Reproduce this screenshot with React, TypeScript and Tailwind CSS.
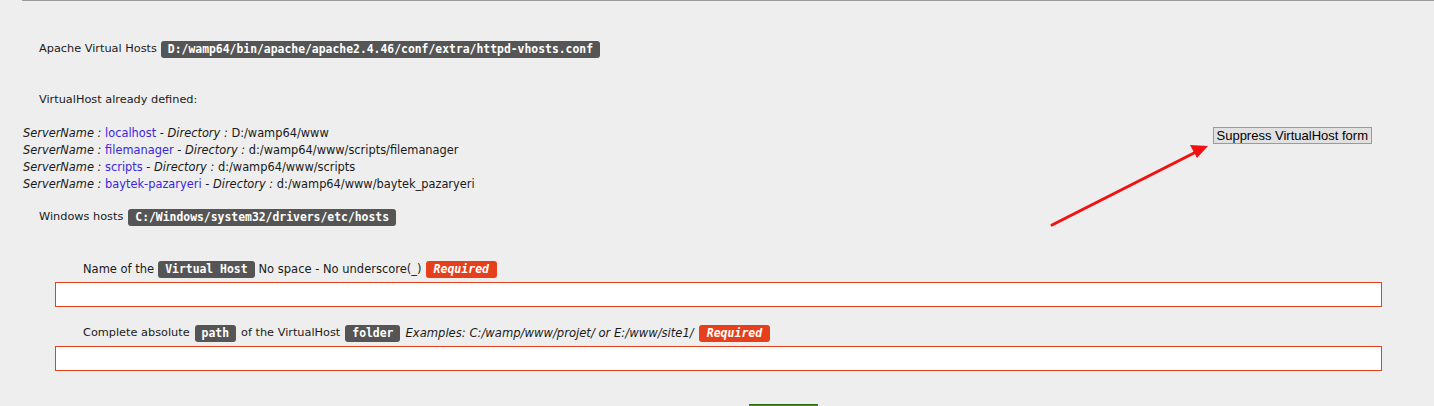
import React from "react";

const sans = { fontFamily: '"DejaVu Sans", Verdana, sans-serif' } as const;

function Code({ children }: { children: React.ReactNode }) {
  return (
    <span className="inline-flex items-center h-[17px] px-[7px] rounded-[3px] bg-[#555555] text-white font-bold text-[11.4px] leading-none align-middle [font-family:'DejaVu_Sans_Mono',monospace]">
      {children}
    </span>
  );
}

function Required() {
  return (
    <span className="inline-flex items-center h-[17px] px-[8px] rounded-[3px] bg-[#e5401b] text-white font-bold italic text-[11.5px] leading-none align-middle [font-family:'DejaVu_Sans_Mono',monospace]">
      Required
    </span>
  );
}

const hosts = [
  { name: "localhost", dir: "D:/wamp64/www" },
  { name: "filemanager", dir: "d:/wamp64/www/scripts/filemanager" },
  { name: "scripts", dir: "d:/wamp64/www/scripts" },
  { name: "baytek-pazaryeri", dir: "d:/wamp64/www/baytek_pazaryeri" },
];

export default function App() {
  return (
    <div
      className="relative w-[1434px] h-[406px] overflow-hidden bg-[#eeeeee] text-[#1a1a1a] text-[11.3px]"
      style={sans}
    >
      <div className="ml-[22px] border-t border-[#9a9a9a]" />

      <div className="mt-[40px] pl-[39px] flex items-center gap-[4px] h-[17px]">
        <span>Apache Virtual Hosts</span>
        <Code>D:/wamp64/bin/apache/apache2.4.46/conf/extra/httpd-vhosts.conf</Code>
      </div>

      <div className="mt-[34px] pl-[39px] h-[17px] flex items-center">
        VirtualHost already defined:
      </div>

      <div className="mt-[16px] flex items-start justify-between pr-[62px]">
        <div className="pl-[23px] flex flex-col text-[11.4px]">
          {hosts.map((h) => (
            <div key={h.name} className="h-[17px] flex items-center whitespace-pre">
              <span className="italic">ServerName : </span>
              <span className="text-[#3b27dd]">{h.name}</span>
              <span> - </span>
              <span className="italic">Directory : </span>
              <span>{h.dir}</span>
            </div>
          ))}
        </div>
        <button className="mt-[2px] h-[17px] px-[3px] bg-[#e1e1e1] border border-[#9a9a9a] text-black text-[13px] leading-none [font-family:'Liberation_Sans',Arial,sans-serif]">
          Suppress VirtualHost form
        </button>
      </div>

      <div className="mt-[16px] pl-[39px] flex items-center gap-[5px] h-[17px]">
        <span>Windows hosts</span>
        <Code>C:/Windows/system32/drivers/etc/hosts</Code>
      </div>

      <div className="mt-[35px] pl-[83px] flex items-center gap-[4px] h-[17px] text-[11.5px]">
        <span>Name of the</span>
        <Code>Virtual Host</Code>
        <span>No space - No underscore(_)</span>
        <Required />
      </div>
      <div className="mt-[4px] ml-[55px] w-[1327px] h-[25px] bg-white border border-[#e5401b]" />

      <div className="mt-[18px] pl-[83px] flex items-center gap-[5px] h-[17px]">
        <span>Complete absolute</span>
        <Code>path</Code>
        <span>of the VirtualHost</span>
        <Code>folder</Code>
        <span className="italic text-[11.6px]">Examples: C:/wamp/www/projet/ or E:/www/site1/</span>
        <Required />
      </div>
      <div className="mt-[4px] ml-[55px] w-[1327px] h-[25px] bg-white border border-[#e5401b]" />

      <div className="mt-[33px] ml-[749px] w-[69px] h-[20px] bg-[#4a8a2a] border-t border-[#2f6a16]" />

      <svg
        className="absolute left-0 top-0 pointer-events-none"
        width="1434"
        height="406"
        viewBox="0 0 1434 406"
      >
        <line x1="1052" y1="225" x2="1196" y2="152" stroke="#f21010" strokeWidth="3" strokeLinecap="round" />
        <polygon points="1208,146 1190,145 1197,158" fill="#f21010" />
      </svg>
    </div>
  );
}
